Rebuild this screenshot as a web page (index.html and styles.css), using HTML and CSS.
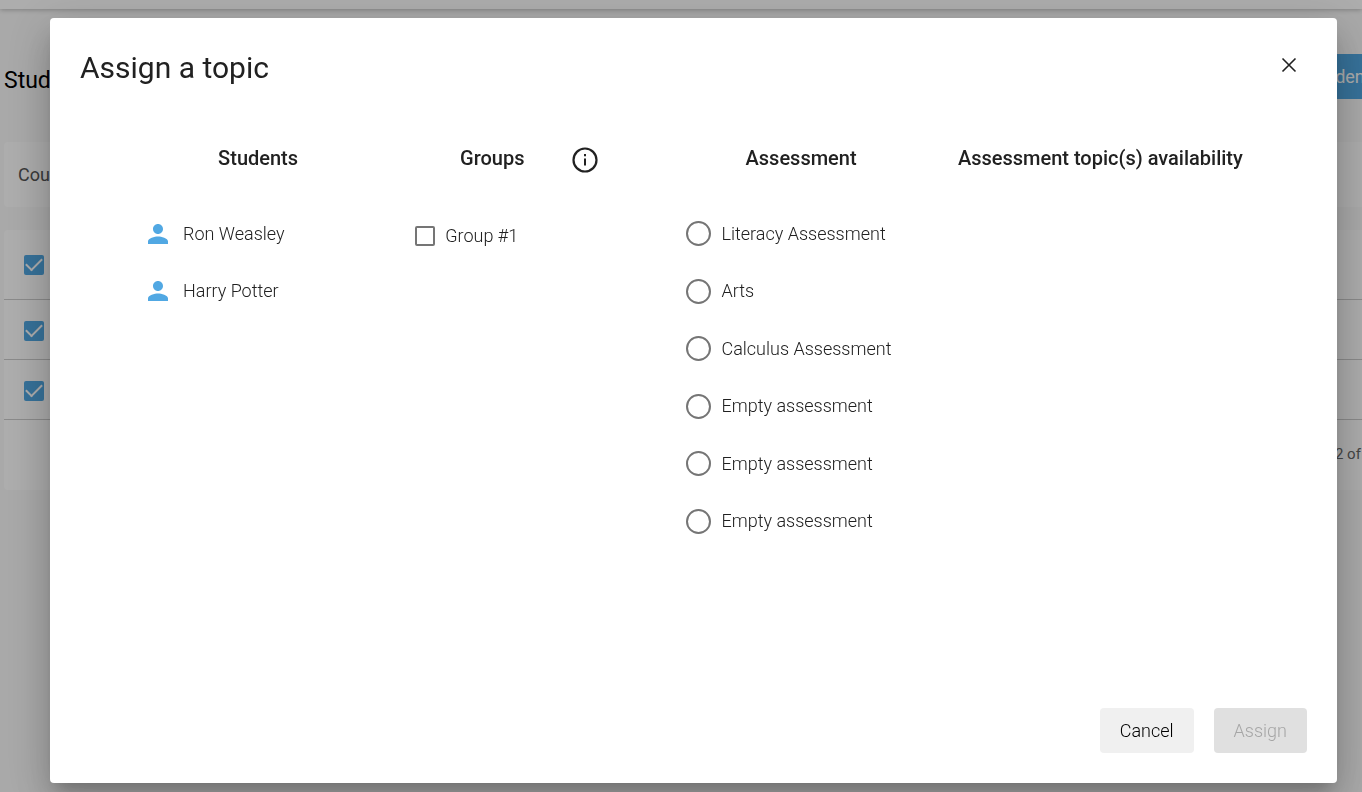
FILE: index.html
```html
<!DOCTYPE html>
<html lang="en">
<head>
<meta charset="utf-8">
<title>Assign a topic</title>
<link rel="stylesheet" href="styles.css">
</head>
<body>
<div class="page">
  <div class="toolbar"></div>
  <main class="main">
    <header class="page-head">
      <h1 class="page-title">Students</h1>
      <button class="add-button" type="button">Students</button>
    </header>
    <div class="card filter">Course</div>
    <div class="card list">
      <div class="list-row first"><input class="tick" type="checkbox" aria-label="Select student 1" checked></div>
      <div class="list-row"><input class="tick" type="checkbox" aria-label="Select student 2" checked></div>
      <div class="list-row"><input class="tick" type="checkbox" aria-label="Select student 3" checked></div>
      <div class="pager">2 of 2</div>
    </div>
  </main>
</div>

<div class="backdrop">
  <section class="dialog" role="dialog" aria-modal="true" aria-labelledby="dialog-title">
    <header class="dialog-head">
      <h2 class="dialog-title" id="dialog-title">Assign a topic</h2>
      <button class="close" type="button" aria-label="Close">
        <svg width="24" height="24" viewBox="0 0 24 24"><path d="M5.500 5.500L18.500 18.500M18.500 5.500L5.500 18.500" fill="none" stroke="currentColor" stroke-width="1.600"/></svg>
      </button>
    </header>
    <div class="columns">
      <div class="column">
        <h3 class="column-title">Students</h3>
        <ul class="students">
          <li class="student"><svg class="person" viewBox="0 0 24 24"><path d="M12 12c2.210 0 4-1.790 4-4s-1.790-4-4-4-4 1.790-4 4 1.790 4 4 4zm0 2c-2.670 0-8 1.340-8 4v2h16v-2c0-2.660-5.330-4-8-4z"/></svg>Ron Weasley</li>
          <li class="student"><svg class="person" viewBox="0 0 24 24"><path d="M12 12c2.210 0 4-1.790 4-4s-1.790-4-4-4-4 1.790-4 4 1.790 4 4 4zm0 2c-2.670 0-8 1.340-8 4v2h16v-2c0-2.660-5.330-4-8-4z"/></svg>Harry Potter</li>
        </ul>
      </div>
      <div class="column">
        <div class="title-with-info">
          <h3 class="column-title">Groups</h3>
          <svg class="info" viewBox="0 0 26 26"><circle cx="13" cy="13" r="11.500" fill="none" stroke="currentColor" stroke-width="2.200"/><path d="M12 7h2v2.200h-2zM12 11.500h2v7h-2z" fill="currentColor"/></svg>
        </div>
        <label class="group"><input class="box" type="checkbox">Group #1</label>
      </div>
      <div class="spacer"></div>
      <div class="column">
        <h3 class="column-title">Assessment</h3>
        <div class="assessments" role="radiogroup" aria-label="Assessment">
          <label class="assessment"><input class="radio" type="radio" name="assessment">Literacy Assessment</label>
          <label class="assessment"><input class="radio" type="radio" name="assessment">Arts</label>
          <label class="assessment"><input class="radio" type="radio" name="assessment">Calculus Assessment</label>
          <label class="assessment"><input class="radio" type="radio" name="assessment">Empty assessment</label>
          <label class="assessment"><input class="radio" type="radio" name="assessment">Empty assessment</label>
          <label class="assessment"><input class="radio" type="radio" name="assessment">Empty assessment</label>
        </div>
      </div>
      <div class="column">
        <h3 class="column-title">Assessment topic(s) availability</h3>
      </div>
    </div>
    <footer class="actions">
      <button class="action" type="button">Cancel</button>
      <button class="action assign" type="button" disabled>Assign</button>
    </footer>
  </section>
</div>
</body>
</html>
```
FILE: styles.css
```css
* { box-sizing: border-box; }
html, body { height: 100%; }
body {
  margin: 0;
  overflow: hidden;
  background: #fafafa;
  color: #212121;
  font: 300 18px/24px Roboto, sans-serif;
}
h1, h2, h3, ul { margin: 0; padding: 0; }
ul { list-style: none; }
button, input { font: inherit; margin: 0; }

/* Student list page */
.toolbar {
  height: 9px;
  background: #fff;
  box-shadow: 0 1px 5px rgba(0, 0, 0, .25);
}
.main { padding: 45px 0 0 4px; margin-right: -48px; }
.page-head {
  display: flex;
  justify-content: space-between;
  align-items: center;
  margin-bottom: 43px;
}
.page-title {
  padding-top: 8px;
  color: #000;
  font-size: 23px;
  font-weight: 400;
  line-height: 32px;
}
.add-button {
  height: 45px;
  padding: 0 30px;
  border: 0;
  background: #51a8e3;
  color: #fff;
  font-weight: 400;
}
.card { background: #fff; border-radius: 4px; }
.filter {
  height: 65px;
  margin-bottom: 23px;
  padding: 21px 14px;
  color: #555;
  font-weight: 400;
}
.list-row {
  height: 60px;
  display: flex;
  align-items: center;
  padding: 2px 0 0 20px;
  border-bottom: 1px solid #ccc;
}
.first { height: 70px; padding-top: 0; }
.tick {
  appearance: none;
  width: 20px;
  height: 20px;
  border-radius: 2px;
  background: #51a8e3;
  display: grid;
  place-items: center;
}
.tick::before {
  content: "";
  width: 14px;
  height: 7px;
  border: solid #fff;
  border-width: 0 0 2px 2px;
  transform: translateY(-2px) rotate(-45deg);
}
.pager {
  height: 70px;
  padding: 22px 37px;
  text-align: right;
  font-size: 15px;
  font-weight: 400;
  color: #666;
}

/* Dialog */
.backdrop {
  position: fixed;
  inset: 0;
  display: flex;
  padding: 18px 25px 9px 50px;
  background: rgba(0, 0, 0, .32);
}
.dialog {
  flex: 1;
  display: flex;
  flex-direction: column;
  padding: 30px;
  background: #fff;
  border-radius: 4px;
  box-shadow: 0 11px 15px -7px rgba(0, 0, 0, .2), 0 24px 38px 3px rgba(0, 0, 0, .14), 0 9px 46px 8px rgba(0, 0, 0, .12);
}
.dialog-head {
  display: flex;
  justify-content: space-between;
  align-items: flex-start;
  height: 80px;
}
.dialog-title { font-size: 30px; font-weight: 400; line-height: 40px; }
.close {
  display: flex;
  padding: 5px 6px;
  border: 0;
  background: none;
  color: #212121;
}
.columns {
  flex: 1;
  display: grid;
  grid-template-columns: 234fr 234fr 42fr 299fr 299fr;
  padding: 0 57px 0 61px;
}
.column-title {
  height: 60px;
  font-size: 20px;
  font-weight: 500;
  line-height: 60px;
  text-align: center;
  white-space: nowrap;
}
.title-with-info {
  display: grid;
  grid-template-columns: 1fr auto 1fr;
  align-items: center;
}
.title-with-info .column-title { grid-column: 2; }
.info { width: 26px; height: 26px; margin: 4px 0 0 47px; }
.students, .assessments {
  display: grid;
  grid-auto-rows: 1fr;
  margin-top: 17px;
}
.students { height: 115px; padding-left: 2px; }
.student, .assessment, .group {
  display: flex;
  align-items: center;
  gap: 10px;
}
.person { width: 30px; height: 30px; fill: #51a8e3; }
.group { height: 58px; margin-top: 19px; padding-left: 40px; }
.box {
  appearance: none;
  width: 20px;
  height: 20px;
  border: 2px solid #757575;
  border-radius: 2px;
}
.assessments { height: 345px; padding-left: 35px; }
.radio {
  appearance: none;
  width: 25px;
  height: 25px;
  border: 2px solid #757575;
  border-radius: 50%;
}
.actions { display: flex; justify-content: flex-end; gap: 20px; }
.action {
  height: 45px;
  padding: 0 20px;
  border: 0;
  border-radius: 4px;
  background: #f0f0f0;
  color: #000;
}
.assign { background: #e0e0e0; color: #a6a6a6; }
```
